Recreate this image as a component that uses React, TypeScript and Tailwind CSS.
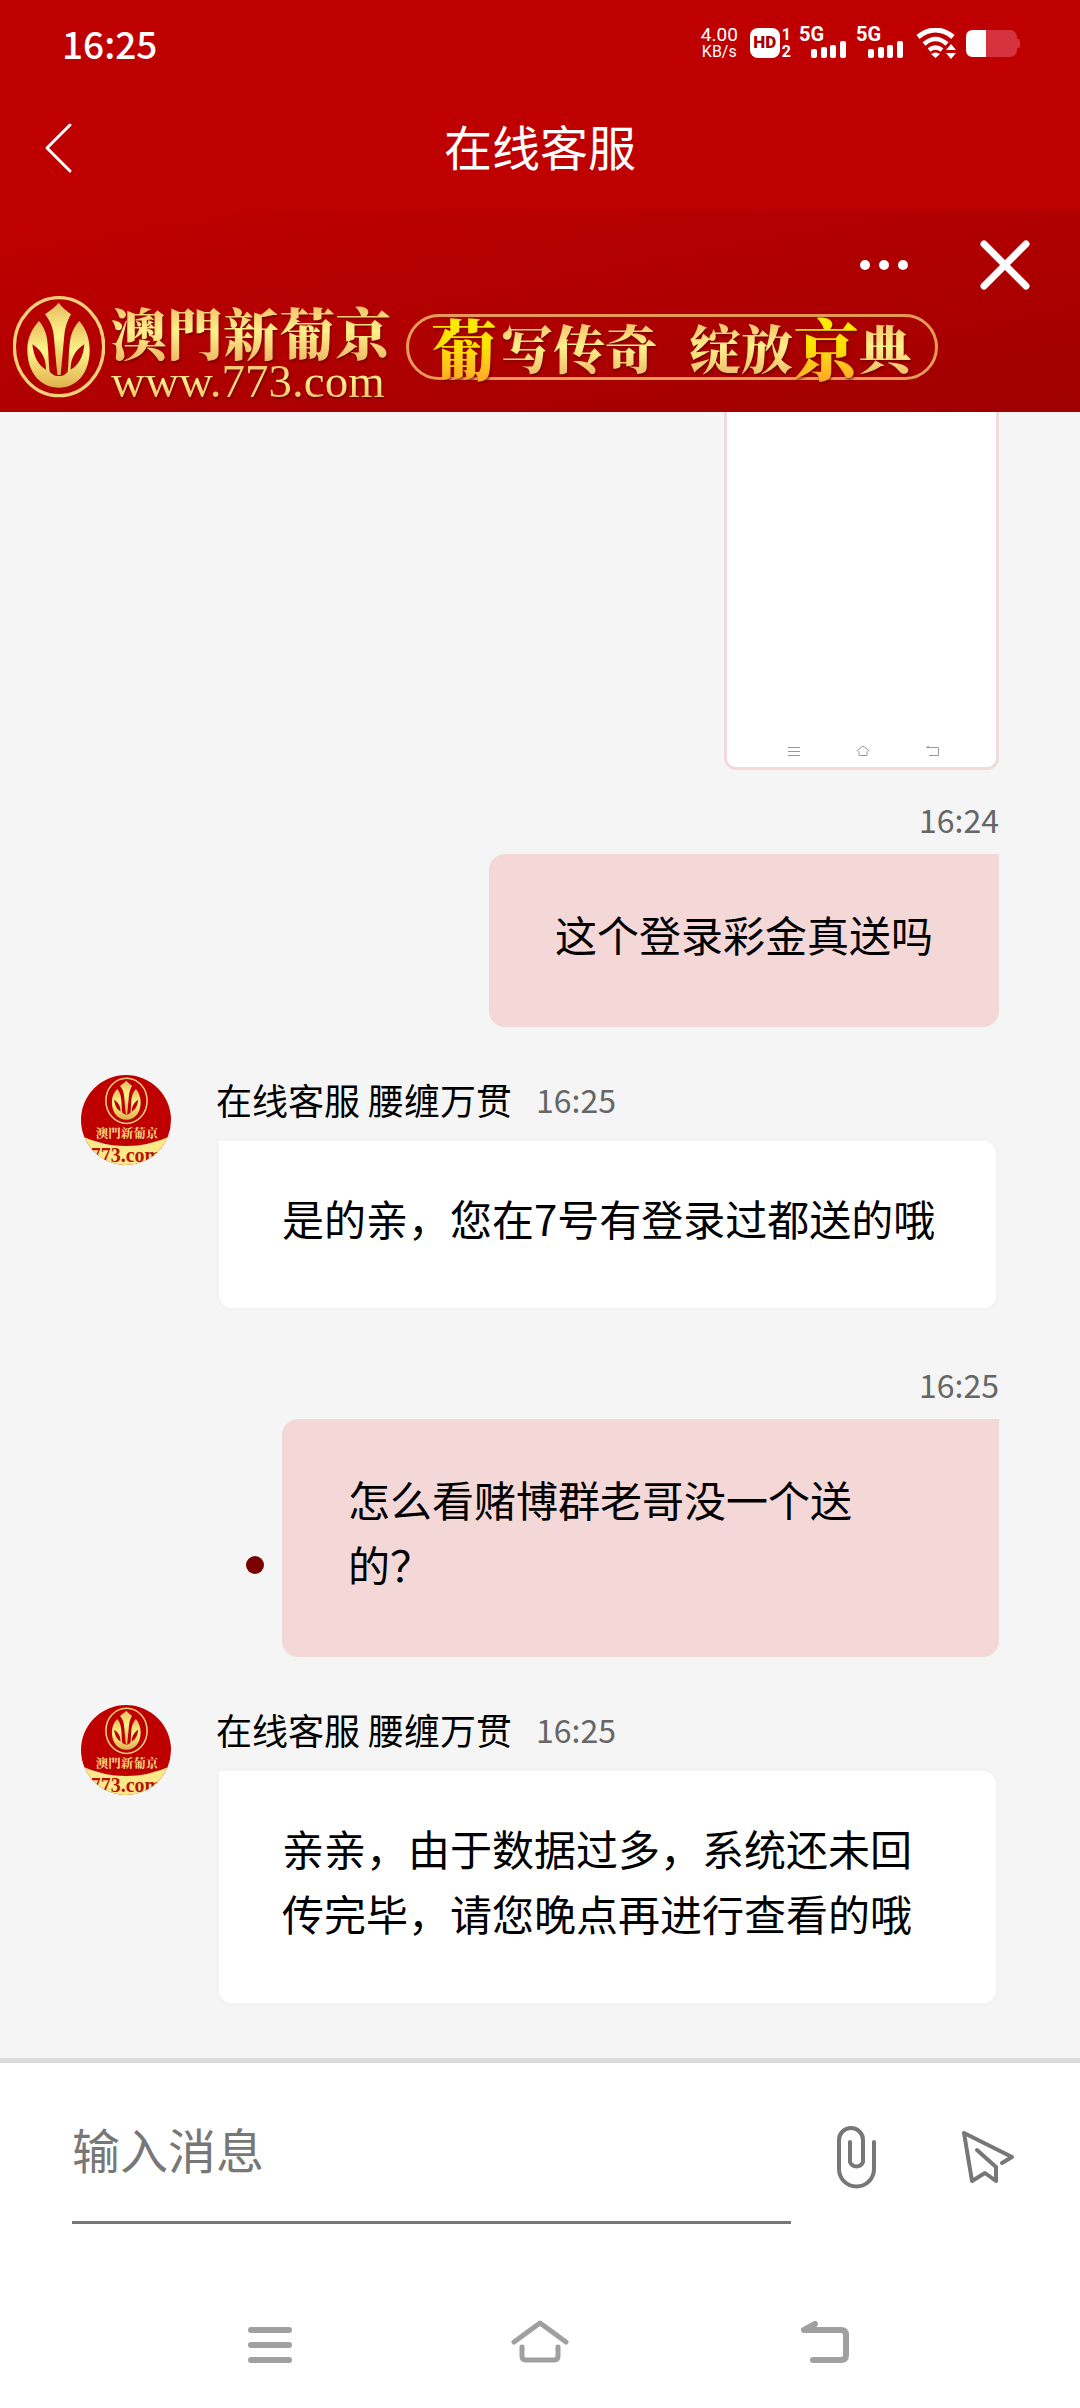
import type { ReactNode } from "react";

const goldText =
  "bg-gradient-to-b from-[#f3b765] via-[#fdf08a] to-[#eeb968] bg-clip-text text-transparent drop-shadow-[1px_2px_1px_rgba(90,0,0,0.6)]";
const brushText =
  "bg-gradient-to-b from-[#fff200] via-[#ffe100] to-[#ff9a2a] bg-clip-text text-transparent drop-shadow-[1px_2px_1px_rgba(90,0,0,0.6)]";

function Emblem({ id }: { id: string }) {
  return (
    <>
      <defs>
        <linearGradient id={id} x1="0" y1="0" x2="0" y2="1">
          <stop offset="0" stopColor="#e5bb5e" />
          <stop offset="0.45" stopColor="#fff58a" />
          <stop offset="1" stopColor="#dfb04e" />
        </linearGradient>
      </defs>
      <ellipse cx="177" cy="437" rx="134" ry="147" fill="none" stroke="#f6cf78" strokeWidth="10" />
      <path
        fill={`url(#${id})`}
        d="M176 305C184 318 199 328 213 340C203 358 196 376 193 402L182 522H172L161 402C158 376 149 358 135 340C150 328 167 318 176 305Z"
      />
      <path
        fill={`url(#${id})`}
        fillRule="evenodd"
        d="M117 360C129 374 139 394 142 420C146 452 145 484 149 512C158 522 166 525 176 525C187 525 195 522 203 512C207 484 205 452 210 420C214 394 225 374 238 360C256 380 269 411 269 446C269 515 231 560 177 560C122 560 82 515 82 446C82 411 97 380 117 360ZM97 430C101 466 114 493 138 506C139 474 124 446 97 430ZM253 430C226 446 211 474 212 506C236 493 250 466 253 430Z"
      />
    </>
  );
}

function Signal() {
  return (
    <div className="flex h-8 w-12 flex-col text-white">
      <span className="h-[14px] font-['Roboto',sans-serif] text-[20px] leading-[14px] font-bold">5G</span>
      <svg className="self-end" width="36" height="17" viewBox="0 0 36 17" fill="currentColor">
        <rect x="0" y="8" width="6" height="9" rx="2" />
        <rect x="10" y="6" width="6" height="11" rx="2" />
        <rect x="19" y="4" width="6" height="13" rx="2" />
        <rect x="29" y="0" width="6" height="17" rx="2" />
      </svg>
    </div>
  );
}

function StatusBar() {
  return (
    <div className="flex h-[86px] items-center justify-between pr-[60px] pl-[62px] text-white">
      <span className="text-[37px] leading-10 font-medium">16:25</span>
      <div className="flex items-center">
        <div className="mr-3 flex flex-col items-center font-['Roboto',sans-serif] leading-[17px]">
          <span className="text-[19px]">4.00</span>
          <span className="text-[16px]">KB/s</span>
        </div>
        <span className="flex h-[30px] w-[30px] items-center justify-center rounded-lg bg-white font-['Roboto',sans-serif] text-[17px] font-black text-[#a80000]">
          HD
        </span>
        <div className="mr-2 ml-0.5 flex flex-col items-center font-['Roboto',sans-serif] text-[16px] leading-[17px] font-bold">
          <span>1</span>
          <span>2</span>
        </div>
        <div className="mr-3 flex gap-[9px]">
          <Signal />
          <Signal />
        </div>
        <svg className="mr-2.5" width="40" height="31" viewBox="0 0 40 31" fill="none" stroke="#fff">
          <path d="M2 9Q19.500 -5 37 9" strokeWidth="5" />
          <path d="M8 16Q19.500 6 31 16" strokeWidth="4.500" />
          <path d="M13 22Q19.500 17 26 22" strokeWidth="4.500" />
          <path d="M15 26Q19.500 23 24 26L19.500 30Z" fill="#fff" stroke="none" />
          <path d="M30 22L35 16L40 22ZM30 25H40L35 31Z" fill="#fff" stroke="none" />
        </svg>
        <svg width="54" height="27" viewBox="0 0 54 27">
          <rect width="51" height="27" rx="7" fill="#d7333f" />
          <rect x="49" y="9" width="5" height="9" rx="2" fill="#d7333f" />
          <path d="M20 0H7Q0 0 0 7V20Q0 27 7 27H20Z" fill="#fff" />
        </svg>
      </div>
    </div>
  );
}

function TitleBar() {
  return (
    <div className="grid h-[124px] grid-cols-[110px_1fr_110px] items-center text-white">
      <button type="button" aria-label="返回" className="flex justify-start pl-[42px]">
        <svg width="34" height="54" viewBox="0 0 34 54" fill="none" stroke="currentColor" strokeWidth="3" strokeLinecap="round" strokeLinejoin="round">
          <path d="M28 4L5 27L28 50" />
        </svg>
      </button>
      <h1 className="pb-1.5 text-center text-[48px] leading-[60px]">在线客服</h1>
    </div>
  );
}

function Banner() {
  return (
    <div className="flex h-[202px] flex-col bg-gradient-to-br from-[#c00000] via-[#b00000] to-[#a00000]">
      <div className="flex h-[83px] items-end justify-end pr-12 text-white">
        <button type="button" aria-label="更多" className="mr-[68px] flex h-14 items-center">
          <svg width="52" height="12" viewBox="0 0 52 12" fill="currentColor">
            <circle cx="7" cy="6" r="5" />
            <circle cx="26" cy="6" r="5" />
            <circle cx="45" cy="6" r="5" />
          </svg>
        </button>
        <button type="button" aria-label="关闭" className="flex h-14 items-center">
          <svg width="54" height="54" viewBox="0 0 54 54" fill="none" stroke="currentColor" strokeWidth="7" strokeLinecap="round">
            <path d="M6 6L48 48M48 6L6 48" />
          </svg>
        </button>
      </div>
      <div className="flex items-center pl-[13px]">
        <svg width="92" height="104" viewBox="39 282 276 312">
          <Emblem id="bannerGold" />
        </svg>
        <div className="ml-1.5 flex flex-col pt-2 whitespace-nowrap">
          <span className={`font-['Noto_Serif_CJK_TC','Noto_Sans_CJK_TC',serif] text-[56px] leading-[60px] font-black ${goldText}`}>
            澳門新葡京
          </span>
          <span className={`font-['Liberation_Serif',serif] text-[47px] leading-[40px] ${goldText}`}>www.773.com</span>
        </div>
        <div className="ml-[15px] flex h-[66px] items-center rounded-full border-[3px] border-[#e59b57] pr-6 pl-[22px] font-['Noto_Serif_CJK_SC','Noto_Sans_CJK_SC',serif] text-[52px] font-black whitespace-nowrap">
          <span className={`text-[66px] leading-[84px] ${brushText}`}>葡</span>
          <span className={`ml-1 leading-[60px] ${goldText}`}>写传奇</span>
          <span className={`ml-8 leading-[60px] ${goldText}`}>绽放</span>
          <span className={`text-[66px] leading-[84px] ${brushText}`}>京</span>
          <span className={`leading-[60px] ${goldText}`}>典</span>
        </div>
      </div>
    </div>
  );
}

function Avatar({ id }: { id: string }) {
  return (
    <svg className="shrink-0 rounded-full" width="90" height="90" viewBox="0 0 90 90">
      <rect width="90" height="90" fill="#bf0000" />
      <svg x="24" y="2" width="43" height="48" viewBox="39 282 276 312">
        <Emblem id={id} />
      </svg>
      <text x="46" y="63" textAnchor="middle" fontSize="12.500" fontWeight="700" fill="#fbdc86" fontFamily="Noto Serif CJK TC, Noto Sans CJK TC, serif">
        澳門新葡京
      </text>
      <path d="M0 61Q45 81 90 61V90H0Z" fill="#fbe98a" />
      <text x="45" y="87" textAnchor="middle" fontSize="20" fontWeight="700" fill="#b51400" fontFamily="Liberation Serif, serif">
        773.com
      </text>
    </svg>
  );
}

function SentMessage({ time, pending, children }: { time: string; pending?: boolean; children: ReactNode }) {
  return (
    <div className="flex flex-col items-end pr-[81px]">
      <time className="mb-4 text-[32px] leading-[38px] text-[#666]">{time}</time>
      <div className="flex items-end gap-[18px]">
        {pending && <span className="mb-[83px] h-[18px] w-[18px] rounded-full bg-[#7b0000]" />}
        <p className="max-w-[717px] rounded-2xl rounded-tr-none bg-[#f4d7d7] px-[66px] pt-[47px] pb-[61px] text-[42px] leading-[65px]">
          {children}
        </p>
      </div>
    </div>
  );
}

function ReceivedMessage({ id, time, children }: { id: string; time: string; children: ReactNode }) {
  return (
    <div className="mt-12 flex items-start gap-[45px] px-[81px]">
      <Avatar id={id} />
      <div className="flex-1">
        <div className="mb-[15px] flex items-center gap-6 leading-[48px]">
          <span className="text-[36px]">在线客服 腰缠万贯</span>
          <time className="text-[32px] text-[#666]">{time}</time>
        </div>
        <p className="rounded-2xl rounded-tl-none border-[3px] border-[#f3f3f3] bg-white pt-11 pr-14 pb-[58px] pl-[63px] text-[42px] leading-[65px]">
          {children}
        </p>
      </div>
    </div>
  );
}

function SentImage() {
  return (
    <div className="flex justify-end pr-[81px]">
      <div className="flex h-[358px] w-[275px] items-end rounded-b-xl border-x-[3px] border-b-[3px] border-[#f0dada] bg-white">
        <div className="flex w-full items-center justify-between pr-[57px] pb-2.5 pl-[61px] text-[#999]">
          <svg width="12" height="12" viewBox="0 0 12 12" stroke="currentColor">
            <path d="M0 2.500H12M0 6.500H12M0 10.500H12" />
          </svg>
          <svg width="14" height="12" viewBox="0 0 14 12" fill="none" stroke="currentColor">
            <path d="M0.500 6L7 1L13.500 6M3 6V10.500H11V6" />
          </svg>
          <svg width="13" height="12" viewBox="0 0 13 12" fill="none" stroke="currentColor">
            <path d="M3 1L0.500 2.500H12.500V10.500H3" />
          </svg>
        </div>
      </div>
    </div>
  );
}

function Composer() {
  return (
    <form className="flex items-start bg-white pt-[30px] pr-[60px] pl-[72px]" onSubmit={(e) => e.preventDefault()}>
      <input
        type="text"
        aria-label="输入消息"
        placeholder="输入消息"
        className="h-[131px] min-w-0 flex-1 border-b-[3px] border-[#777] bg-transparent pb-[18px] text-[48px] outline-none placeholder:text-[#777]"
      />
      <button type="button" aria-label="附件" className="mt-[33px] ml-[45px]">
        <svg width="42" height="64" viewBox="0 0 42 64" fill="none" stroke="#777" strokeWidth="4" strokeLinecap="round">
          <path d="M38 16V43A17.500 17.500 0 0 1 3 43V14A12 12 0 0 1 27 14V36A7 7 0 0 1 14 36V16" />
        </svg>
      </button>
      <button type="submit" aria-label="发送" className="mt-[35px] ml-20">
        <svg width="62" height="60" viewBox="0 0 62 60" fill="none" stroke="#777" strokeWidth="4" strokeLinecap="round" strokeLinejoin="round">
          <path d="M44 35L54 29L6 5L14 53L27 45L38 53V39L19 22" />
        </svg>
      </button>
    </form>
  );
}

function SystemNav() {
  return (
    <nav className="grid grid-cols-3 justify-items-center bg-white px-[135px] pt-[91px] pb-[39px] text-[#a0a0a0]">
      <button type="button" aria-label="菜单">
        <svg width="46" height="54" viewBox="0 0 46 54" stroke="currentColor" strokeWidth="6" strokeLinecap="round">
          <path d="M4 15H42M4 30H42M4 45H42" />
        </svg>
      </button>
      <button type="button" aria-label="主页">
        <svg width="60" height="54" viewBox="0 0 60 54" fill="none" stroke="currentColor" strokeWidth="5" strokeLinecap="round" strokeLinejoin="round">
          <path d="M4 27L30 8L56 27" />
          <path d="M12 32V41Q12 45 16 45H44Q48 45 48 41V32" />
        </svg>
      </button>
      <button type="button" aria-label="返回上一页">
        <svg width="78" height="54" viewBox="0 0 78 54" fill="none" stroke="currentColor" strokeWidth="6" strokeLinecap="round" strokeLinejoin="round">
          <path d="M44 9L33 15H70Q75 15 75 20V40Q75 45 70 45H42" />
        </svg>
      </button>
    </nav>
  );
}

export default function App() {
  return (
    <div className="flex min-h-screen flex-col bg-white font-['Noto_Sans_CJK_SC',sans-serif] text-black">
      <header className="bg-[#bf0000]">
        <StatusBar />
        <TitleBar />
        <Banner />
      </header>
      <main className="flex-1 border-b-[5px] border-[#dcdcdc] bg-[#f5f5f5] pb-[51px]">
        <SentImage />
        <div className="mt-[30px]">
          <SentMessage time="16:24">这个登录彩金真送吗</SentMessage>
        </div>
        <ReceivedMessage id="goldOne" time="16:25">
          是的亲，您在7号有登录过都送的哦
        </ReceivedMessage>
        <div className="mt-[54px]">
          <SentMessage time="16:25" pending>
            怎么看赌博群老哥没一个送的？
          </SentMessage>
        </div>
        <ReceivedMessage id="goldTwo" time="16:25">
          亲亲，由于数据过多，系统还未回传完毕，请您晚点再进行查看的哦
        </ReceivedMessage>
      </main>
      <Composer />
      <SystemNav />
    </div>
  );
}
